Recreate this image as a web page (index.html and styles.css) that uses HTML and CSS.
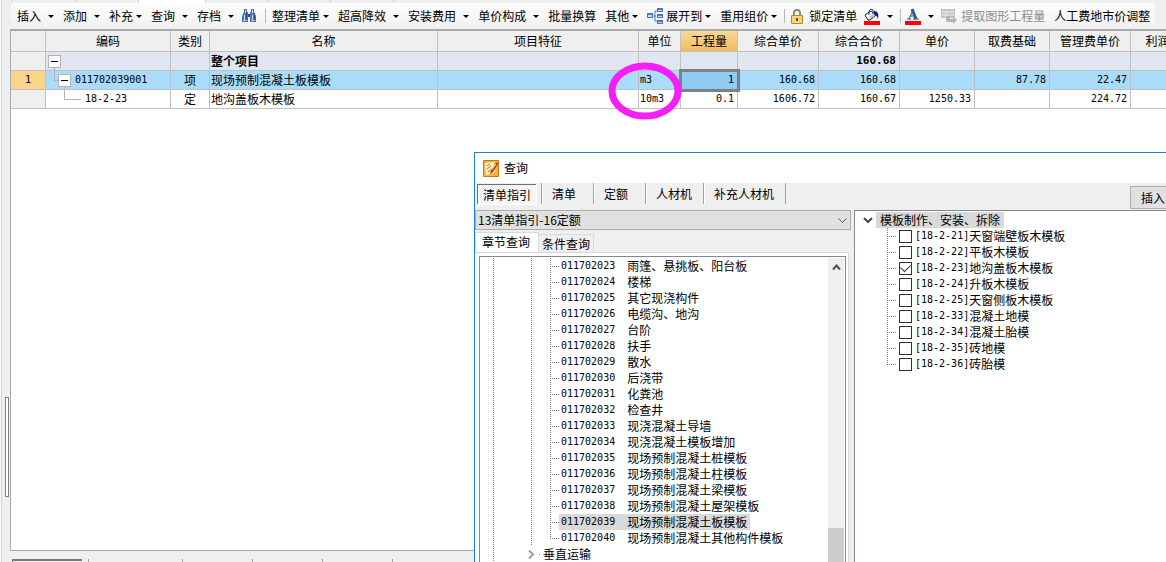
FILE: index.html
```html
<!DOCTYPE html>
<html lang="zh-CN">
<head>
<meta charset="utf-8">
<title>查询</title>
<link rel="stylesheet" href="styles.css">
</head>
<body>
<div class="app">
  <div class="top-strip"><i></i><i></i><i class="on"></i><i></i><i></i><i></i><i></i></div>
  <div class="toolbar">
    <button class="drop">插入</button>
    <button class="drop">添加</button>
    <button class="drop tight">补充</button>
    <button class="drop">查询</button>
    <button class="drop">存档</button>
    <button class="icon-btn" aria-label="查找">
      <svg width="16" height="14" viewBox="0 0 16 14"><path d="M3 0h3v3h1v2h2V3h1V0h3v3l2 4v6h-6V8H7v5H1V7l2-4z" fill="#4a72b4"/><path d="M4 1h1v3H4zM11 1h1v3h-1zM3 6h1v5H3zM11 6h1v5h-1z" fill="#d0def5"/><path d="M7 5h2v3H7zM5 3h1v8H5zM13 4h1v7h-1z" fill="#2c4d8b"/><path d="M2 11h4v1H2zM10 11h4v1h-4z" fill="#a9c0e4"/></svg>
    </button>
    <span class="sep"></span>
    <button class="drop tight">整理清单</button>
    <button class="drop">超高降效</button>
    <button class="drop">安装费用</button>
    <button class="drop">单价构成</button>
    <button>批量换算</button>
    <button class="drop tight">其他</button>
    <button class="drop tight">
      <svg width="16" height="16" viewBox="0 0 16 16"><path d="M5 8h4M8 3v10M8 3h3M8 13h3" stroke="#5c7ba8" fill="none"/><path d="M0 5h6v5H0zM10 0h6v4h-6zM10 6h6v4h-6zM10 12h6v4h-6z" fill="#4a78bd"/><path d="M1 7h4v2H1zM11 2h4v1h-4zM11 8h4v1h-4zM11 14h4v1h-4z" fill="#c5dcf8"/></svg>
      展开到</button>
    <button class="drop tight">重用组价</button>
    <span class="sep"></span>
    <button class="lock">
      <svg width="14" height="15" viewBox="0 0 14 15"><path d="M4 7V4a3 3 0 0 1 6 0v3" fill="none" stroke="#8a8a8a" stroke-width="2"/><rect x="1" y="6" width="12" height="9" rx="1" fill="#b98726"/><path d="M2 7h10v7H2z" fill="#f0c85a"/><path d="M2 8h10M2 11h10M2 13h10" stroke="#fbe6a2"/><path d="M6 9h2v3H6z" fill="#76501a"/></svg>
      锁定清单</button>
    <button class="drop color" aria-label="填充颜色">
      <svg width="16" height="17" viewBox="0 0 16 17"><path d="M1 7l6-4 5 4-6 5H4z" fill="#fff" stroke="#222"/><path d="M5 7V3l2-2 2 1v4" fill="none" stroke="#1c2b80"/><path d="M10 3c4 0 5 3 4 8-1-3-2-4-4-4z" fill="#15246f"/><path d="M5 9l4-3 2 1-5 4z" fill="#b8c4dd"/><path d="M0 13h16v4H0z" fill="#f00"/></svg>
    </button>
    <span class="sep"></span>
    <button class="drop color" aria-label="字体颜色">
      <svg width="16" height="17" viewBox="0 0 16 17"><path d="M4 11L8 2M5 8h6M2 11h4M8 11h6" fill="none" stroke="#32558f"/><path d="M7 1l4 10" stroke="#32558f" stroke-width="3"/><path d="M0 13h16v4H0z" fill="#f00"/></svg>
    </button>
    <button class="off" disabled>
      <svg width="16" height="16" viewBox="0 0 16 16"><path d="M0 1h14v9H0z" fill="#c4c4c4"/><path d="M1 4h12M1 7h12M5 4v6" stroke="#eee"/><path d="M5 8h4v3h3V8l4 4-4 4v-2H7c-2 0-2-2-2-6z" fill="#b4b4b4"/></svg>
      提取图形工程量</button>
    <button>人工费地市价调整</button>
  </div>

  <div class="middle">
    <div class="rail"><div class="splitter"></div></div>
    <div class="grid">
      <table>
        <colgroup><col class="w-no"><col class="w-code"><col class="w-kind"><col class="w-name"><col class="w-feat"><col class="w-unit"><col class="w-qty"><col class="w-money"><col class="w-money"><col class="w-price"><col class="w-price"><col class="w-money"><col class="w-last"></colgroup>
        <thead><tr><th></th><th>编码</th><th>类别</th><th>名称</th><th>项目特征</th><th>单位</th><th class="active">工程量</th><th>综合单价</th><th>综合合价</th><th>单价</th><th>取费基础</th><th>管理费单价</th><th>利润</th></tr></thead>
        <tbody>
          <tr class="total"><td class="no"></td><td><div class="node"><button class="toggle" aria-label="折叠"></button></div></td><td></td><td>整个项目</td><td></td><td></td><td></td><td></td><td class="num">160.68</td><td></td><td></td><td></td><td></td></tr>
          <tr class="selected"><td class="no num">1</td><td><div class="node"><span class="elbow one"></span><button class="toggle" aria-label="折叠"></button><span class="mono">011702039001</span></div></td><td class="mid">项</td><td>现场预制混凝土板模板</td><td></td><td class="mono">m3</td><td class="num cell">1</td><td class="num">160.68</td><td class="num">160.68</td><td></td><td class="num">87.78</td><td class="num">22.47</td><td></td></tr>
          <tr><td class="no"></td><td><div class="node"><span class="elbow two"></span><span class="mono">18-2-23</span></div></td><td class="mid">定</td><td>地沟盖板木模板</td><td></td><td class="mono">10m3</td><td class="num">0.1</td><td class="num">1606.72</td><td class="num">160.67</td><td class="num">1250.33</td><td></td><td class="num">224.72</td><td></td></tr>
        </tbody>
      </table>
    </div>
  </div>
  <div class="bottom-strip"><b></b><i></i><i></i><i></i><i></i><i></i></div>

  <svg class="ring" width="74" height="58" viewBox="0 0 74 58"><ellipse cx="37" cy="29" rx="33" ry="25" fill="none" stroke="#f51ef5" stroke-width="7"/></svg>

  <section class="dialog" aria-label="查询">
    <header>
      <svg width="16" height="17" viewBox="0 0 16 17"><rect width="16" height="17" rx="1" fill="#c9761b"/><rect x="1" y="1" width="14" height="15" fill="#f6b63a"/><path d="M2 3l9-1 1 10-9 3z" fill="#fff2cf"/><path d="M4 6l3-2M4 9l4-3M5 12l4-3" stroke="#b46a1c"/><path d="M14 2L8 10l-1 4 3-2 5-8z" fill="#a8420e"/><path d="M13 4l-4 6" stroke="#ffd873"/></svg>
      查询
    </header>
    <nav class="modes">
      <button class="pressed">清单指引</button><button>清单</button><button>定额</button><button>人材机</button><button>补充人材机</button>
      <button class="insert">插入</button>
    </nav>
    <div class="panes">
      <div class="left">
        <div class="combo">
          <select aria-label="定额库"><option>13清单指引-16定额</option></select>
          <svg width="9" height="6" viewBox="0 0 9 6"><path d="M.5 .5l4 4 4-4" fill="none" stroke="#555"/></svg>
        </div>
        <div class="tabs"><button class="current">章节查询</button><button>条件查询</button></div>
        <div class="tab-body">
          <div class="list">
            <ul class="tree">
              <li class="branch"><ul class="leaves">
                <li><span><code>011702023</code>雨篷、悬挑板、阳台板</span></li>
                <li><span><code>011702024</code>楼梯</span></li>
                <li><span><code>011702025</code>其它现浇构件</span></li>
                <li><span><code>011702026</code>电缆沟、地沟</span></li>
                <li><span><code>011702027</code>台阶</span></li>
                <li><span><code>011702028</code>扶手</span></li>
                <li><span><code>011702029</code>散水</span></li>
                <li><span><code>011702030</code>后浇带</span></li>
                <li><span><code>011702031</code>化粪池</span></li>
                <li><span><code>011702032</code>检查井</span></li>
                <li><span><code>011702033</code>现浇混凝土导墙</span></li>
                <li><span><code>011702034</code>现浇混凝土模板增加</span></li>
                <li><span><code>011702035</code>现场预制混凝土桩模板</span></li>
                <li><span><code>011702036</code>现场预制混凝土柱模板</span></li>
                <li><span><code>011702037</code>现场预制混凝土梁模板</span></li>
                <li><span><code>011702038</code>现场预制混凝土屋架模板</span></li>
                <li><span class="hit"><code>011702039</code>现场预制混凝土板模板</span></li>
                <li><span><code>011702040</code>现场预制混凝土其他构件模板</span></li>
              </ul></li>
              <li class="closed"><svg width="12" height="9" viewBox="0 0 12 9"><path d="M1 .5l4 4-4 4" fill="none" stroke="#a0a0a0" stroke-width="2"/><path d="M11 4h1v1h-1z" fill="#808080"/></svg>垂直运输</li>
            </ul>
            <div class="scroll">
              <svg width="9" height="7" viewBox="0 0 9 7"><path d="M1 5.500l3.500-4 3.500 4" fill="none" stroke="#505050" stroke-width="2"/></svg>
              <div class="thumb"></div>
            </div>
          </div>
        </div>
      </div>
      <div class="right">
        <div class="root"><svg width="10" height="7" viewBox="0 0 10 7"><path d="M1 1l4 4 4-4" fill="none" stroke="#444" stroke-width="2"/></svg><span class="hit">模板制作、安装、拆除</span></div>
        <ul class="checks">
          <li><label><input type="checkbox"><code>[18-2-21]</code>天窗端壁板木模板</label></li>
          <li><label><input type="checkbox"><code>[18-2-22]</code>平板木模板</label></li>
          <li><label><input type="checkbox" checked><code>[18-2-23]</code>地沟盖板木模板</label></li>
          <li><label><input type="checkbox"><code>[18-2-24]</code>升板木模板</label></li>
          <li><label><input type="checkbox"><code>[18-2-25]</code>天窗侧板木模板</label></li>
          <li><label><input type="checkbox"><code>[18-2-33]</code>混凝土地模</label></li>
          <li><label><input type="checkbox"><code>[18-2-34]</code>混凝土胎模</label></li>
          <li><label><input type="checkbox"><code>[18-2-35]</code>砖地模</label></li>
          <li><label><input type="checkbox"><code>[18-2-36]</code>砖胎模</label></li>
        </ul>
      </div>
    </div>
  </section>
</div>
</body>
</html>
```
FILE: styles.css
```css
*, *::before, *::after { box-sizing: border-box; }
html, body { height: 100%; margin: 0; overflow: hidden; }
body {
  background: #efefef;
  color: #000;
  font: 12px/16px "Noto Sans CJK SC", sans-serif;
}
button, select { font: inherit; color: inherit; border: 0; border-radius: 0; background: none; padding: 0; margin: 0; }
ul { list-style: none; margin: 0; padding: 0; }
svg { flex: none; display: block; }
code, .mono, .num { font-family: "DejaVu Sans Mono", monospace; font-size: 10px; }

.app { position: relative; height: 100vh; display: flex; flex-direction: column; overflow: hidden; border-left: 1px solid #f8f8f8; }
.app::before { content: ""; position: absolute; top: 0; bottom: 0; left: 0; border-left: 1px solid #d9d9d9; }

.top-strip { display: flex; flex: none; height: 3px; padding-left: 11px; }
.top-strip i { width: 63px; height: 2px; border-left: 1px solid #d0d0d0; }
.top-strip i.on { width: 67px; height: 3px; background: #fff; }
.top-strip i:nth-child(4) { width: 62px; }

/* toolbar */
.toolbar {
  display: flex; flex: none; align-items: center; height: 26px;
  margin: 0 11px 0 10px; padding-left: 6px;
  border-radius: 3px; white-space: nowrap;
  background: linear-gradient(#fdfdfd, #f7f7f7 50%, #efefef);
}
.toolbar button { display: flex; flex: none; align-items: center; gap: 3px; margin-right: 9px; }
.toolbar .drop::after {
  content: ""; width: 6px; height: 3px; margin-left: 4px;
  border: solid transparent; border-width: 3px 3px 0; border-top-color: #000;
}
.toolbar .tight::after { margin-left: 0; }
.toolbar .icon-btn { margin: 0 8px 0 -2px; }
.toolbar .sep { flex: none; width: 1px; height: 14px; margin-right: 6px; background: #b8b8b8; }
.toolbar .tight + .sep { margin-left: -2px; margin-right: 5px; }
.toolbar .lock { gap: 5px; margin-right: 7px; }
.toolbar .color { margin-right: 7px; }
.toolbar .color + .sep { margin-right: 4px; }
.toolbar .off { gap: 4px; color: #8c8c8c; }

/* bill grid */
.middle { display: flex; flex: 1; min-height: 0; }
.rail { flex: none; width: 9px; padding: 368px 1px 0 4px; }
.splitter { width: 4px; height: 100px; background: #fff; border: 1px solid #808080; }
.grid { flex: 1; min-width: 0; overflow: hidden; background: #fff; border: solid #a9a9a9; border-width: 2px 0 1px 1px; }
table { table-layout: fixed; width: 1174px; border-collapse: separate; border-spacing: 0; }
th, td { height: 19px; padding: 0 0 0 1px; border: solid #c0c0c0; border-width: 0 1px 1px 0; line-height: 16px; text-align: left; white-space: nowrap; }
th { height: 21px; padding: 0; background: #efefef; font-weight: 400; text-align: center; }
th.active { background: linear-gradient(#f8d998, #f3bb5f); }
td.num { text-align: right; padding-right: 3px; }
td.mid, td.no { text-align: center; padding: 0; }
td.no { background: #efefef; }
td.cell { outline: 3px solid #808080; outline-offset: -1px; }
.total td { background: #dfe6f0; font-weight: 700; }
.total td.num { font-size: 11px; }
.total td.no { background: #efefef; }
.selected td { background: #a9dbfb; }
.selected td.no { background: #fdd38b; }
.selected td.cell { background: #8fcbf4; }
.w-no { width: 35px; }
.w-code { width: 125px; }
.w-kind { width: 39px; }
.w-name { width: 228px; }
.w-feat { width: 201px; }
.w-unit { width: 42px; }
.w-qty { width: 57px; }
.w-money { width: 81px; }
.w-price { width: 75px; }
.w-last { width: 54px; }
.node { display: flex; align-items: center; height: 18px; padding-left: 1px; }
.toggle { position: relative; width: 13px; height: 13px; margin-right: 4px; background: #fff; border: 1px solid #b4b4b4; }
.toggle::before { content: ""; position: absolute; left: 2px; right: 2px; top: 5px; height: 1px; background: #000; }
.toggle::after { content: ""; position: absolute; left: 5px; top: 12px; height: 3px; border-left: 1px solid #b4b4b4; }
.elbow { align-self: flex-start; height: 10px; border: solid #b4b4b4; border-width: 0 0 1px 1px; }
.elbow.one { width: 4px; margin-left: 6px; }
.elbow.two { width: 17px; margin: 0 4px 0 16px; }

.bottom-strip { display: flex; flex: none; height: 11px; padding: 8px 0 0 11px; }
.bottom-strip b { width: 70px; margin-right: 6px; border: solid #777; border-width: 2px 0 0 1px; background: #f7f7f7; }
.bottom-strip i { width: 70px; border-left: 1px solid #a0a0a0; }
.bottom-strip i:nth-child(2) { width: 94px; }

.ring { position: absolute; left: 607px; top: 62px; pointer-events: none; }

/* query window */
.dialog {
  position: absolute; left: 473px; top: 152px; right: 0; bottom: 0;
  display: flex; flex-direction: column; overflow: hidden;
  background: #efefef; border: solid #1883d7; border-width: 1px 0 0 1px;
}
.dialog header { display: flex; flex: none; align-items: center; gap: 5px; height: 30px; padding-left: 8px; background: #fff; }
.modes { display: flex; flex: none; height: 27px; padding-left: 2px; }
.modes button { flex: none; height: 21px; padding: 0 17px 0 10px; border-left: 1px solid #a0a0a0; box-shadow: inset 1px 0 #fff; }
.modes .pressed {
  height: 20px; margin: 1px 5px 0 0; padding: 0 5px;
  border: solid #707070; border-width: 1px 0 0 1px; box-shadow: 1px 1px #fff;
  background: repeating-conic-gradient(#fff 0 25%, #eee 0 50%) 0 0 / 2px 2px;
}
.modes button:nth-child(4) { padding-right: 11px; }
.modes button:nth-child(5) { padding-right: 11px; border-right: 1px solid #a0a0a0; }
.modes .insert { height: 23px; margin: 3px -10px 0 auto; padding: 0 10px; border: 1px solid #adadad; box-shadow: none; background: #e1e1e1; }
.panes { display: flex; flex: 1; min-height: 0; gap: 3px; }
.left { display: flex; flex: none; flex-direction: column; width: 376px; }
.combo { position: relative; flex: none; height: 20px; }
.combo select { width: 100%; height: 20px; padding-left: 2px; appearance: none; background: #e1e1e1; border: 1px solid #adadad; }
.combo svg { position: absolute; right: 4px; top: 8px; pointer-events: none; }
.tabs { display: flex; flex: none; align-items: flex-end; height: 22px; padding-top: 2px; }
.tabs button { height: 18px; padding: 0 3px; border: solid #d9d9d9; border-width: 1px 1px 0 0; }
.tabs .current { height: 20px; padding: 0 8px 2px 6px; background: #fff; border-left-width: 1px; }
.tab-body { flex: 1; min-height: 0; margin-right: 2px; padding: 3px 2px 0 4px; border: solid #d9d9d9; border-width: 1px 1px 0 0; background: #fff; }
.list { display: flex; height: 100%; border: solid #828790; border-width: 1px 1px 0 1px; padding: 1px 1px 0 0; overflow: hidden; }
.tree, .leaves, .branch, .checks { background-image: repeating-linear-gradient(#808080 0 1px, transparent 1px 2px); background-repeat: no-repeat; }
.tree { flex: 1; background-position: 13px 0; background-size: 1px 100%; white-space: nowrap; }
.branch { background-position: 51px 0; background-size: 1px 100%; }
.leaves { padding-left: 70px; background-position: 70px 0; background-size: 1px calc(100% - 8px); }
.leaves li, .checks li { display: flex; align-items: center; height: 16px; }
.leaves li::before, .checks li::before { content: ""; flex: none; width: 9px; height: 1px; background: repeating-linear-gradient(90deg, #808080 0 1px, transparent 1px 2px); }
.leaves span { display: flex; padding: 0 3px 0 2px; }
.leaves code { margin-right: 12px; }
.hit { background: #d9d9d9; }
.closed { display: flex; align-items: center; gap: 3px; height: 16px; padding-left: 48px; }
.scroll { display: flex; flex-direction: column; align-items: center; flex: none; width: 16px; padding-top: 6px; background: #efefef; }
.thumb { width: 16px; height: 40px; margin-top: 257px; background: #cdcdcd; }
.right { flex: 1; min-width: 0; padding: 1px 0 0 8px; background: #fff; border: solid #828790; border-width: 1px 0 0 1px; white-space: nowrap; }
.root { display: flex; align-items: center; gap: 3px; height: 16px; }
.root .hit { padding: 0 4px; }
.checks { margin-left: 24px; background-size: 1px calc(100% - 8px); }
.checks label { display: flex; align-items: center; margin-left: 3px; }
.checks input {
  appearance: none; position: relative; width: 13px; height: 13px; margin: 0 3px 0 0;
  border: 1px solid #333; background: #fff;
}
.checks input:checked::after {
  content: ""; position: absolute; left: 1px; top: 1px; width: 9px; height: 6px;
  border: solid #333; border-width: 0 0 1px 1px; transform: rotate(-45deg);
}
```
